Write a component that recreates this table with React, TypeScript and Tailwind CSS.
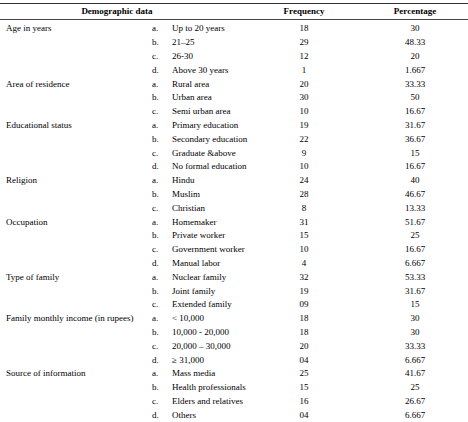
import React from 'react';

type Group = { label: string; items: [string, string, string][] };

const groups: Group[] = [
  { label: 'Age in years', items: [['Up to 20 years', '18', '30'], ['21–25', '29', '48.33'], ['26-30', '12', '20'], ['Above 30 years', '1', '1.667']] },
  { label: 'Area of residence', items: [['Rural area', '20', '33.33'], ['Urban area', '30', '50'], ['Semi urban area', '10', '16.67']] },
  { label: 'Educational status', items: [['Primary education', '19', '31.67'], ['Secondary education', '22', '36.67'], ['Graduate &above', '9', '15'], ['No formal education', '10', '16.67']] },
  { label: 'Religion', items: [['Hindu', '24', '40'], ['Muslim', '28', '46.67'], ['Christian', '8', '13.33']] },
  { label: 'Occupation', items: [['Homemaker', '31', '51.67'], ['Private worker', '15', '25'], ['Government worker', '10', '16.67'], ['Manual labor', '4', '6.667']] },
  { label: 'Type of family', items: [['Nuclear family', '32', '53.33'], ['Joint family', '19', '31.67'], ['Extended family', '09', '15']] },
  { label: 'Family monthly income (in rupees)', items: [['< 10,000', '18', '30'], ['10,000 - 20,000', '18', '30'], ['20,000 – 30,000', '20', '33.33'], ['≥ 31,000', '04', '6.667']] },
  { label: 'Source of information', items: [['Mass media', '25', '41.67'], ['Health professionals', '15', '25'], ['Elders and relatives', '16', '26.67'], ['Others', '04', '6.667']] },
];

const letters = ['a.', 'b.', 'c.', 'd.'];

export default function App() {
  return (
    <div className="w-[468px] h-[422px] bg-white pt-[3px] text-black text-[9px] leading-none" style={{ fontFamily: '"Liberation Serif", serif' }}>
      <div className="border-t border-[#333]">
        <div className="grid grid-cols-[234px_140px_82px] h-[16px] items-center font-bold border-b border-[#444]">
          <div className="text-center">Demographic data</div>
          <div className="text-center">Frequency</div>
          <div className="text-center">Percentage</div>
        </div>
        <div className="pt-[2px] border-b-2 border-black">
          {groups.map((g) =>
            g.items.map(([value, freq, pct], i) => (
              <div key={g.label + i} className="grid grid-cols-[152px_20px_62px_140px_82px] h-[13.8px] items-center">
                <div className="pl-[6px] whitespace-nowrap">{i === 0 ? g.label : ''}</div>
                <div>{letters[i]}</div>
                <div className="whitespace-nowrap">{value}</div>
                <div className="text-center">{freq}</div>
                <div className="text-center">{pct}</div>
              </div>
            ))
          )}
        </div>
      </div>
    </div>
  );
}
